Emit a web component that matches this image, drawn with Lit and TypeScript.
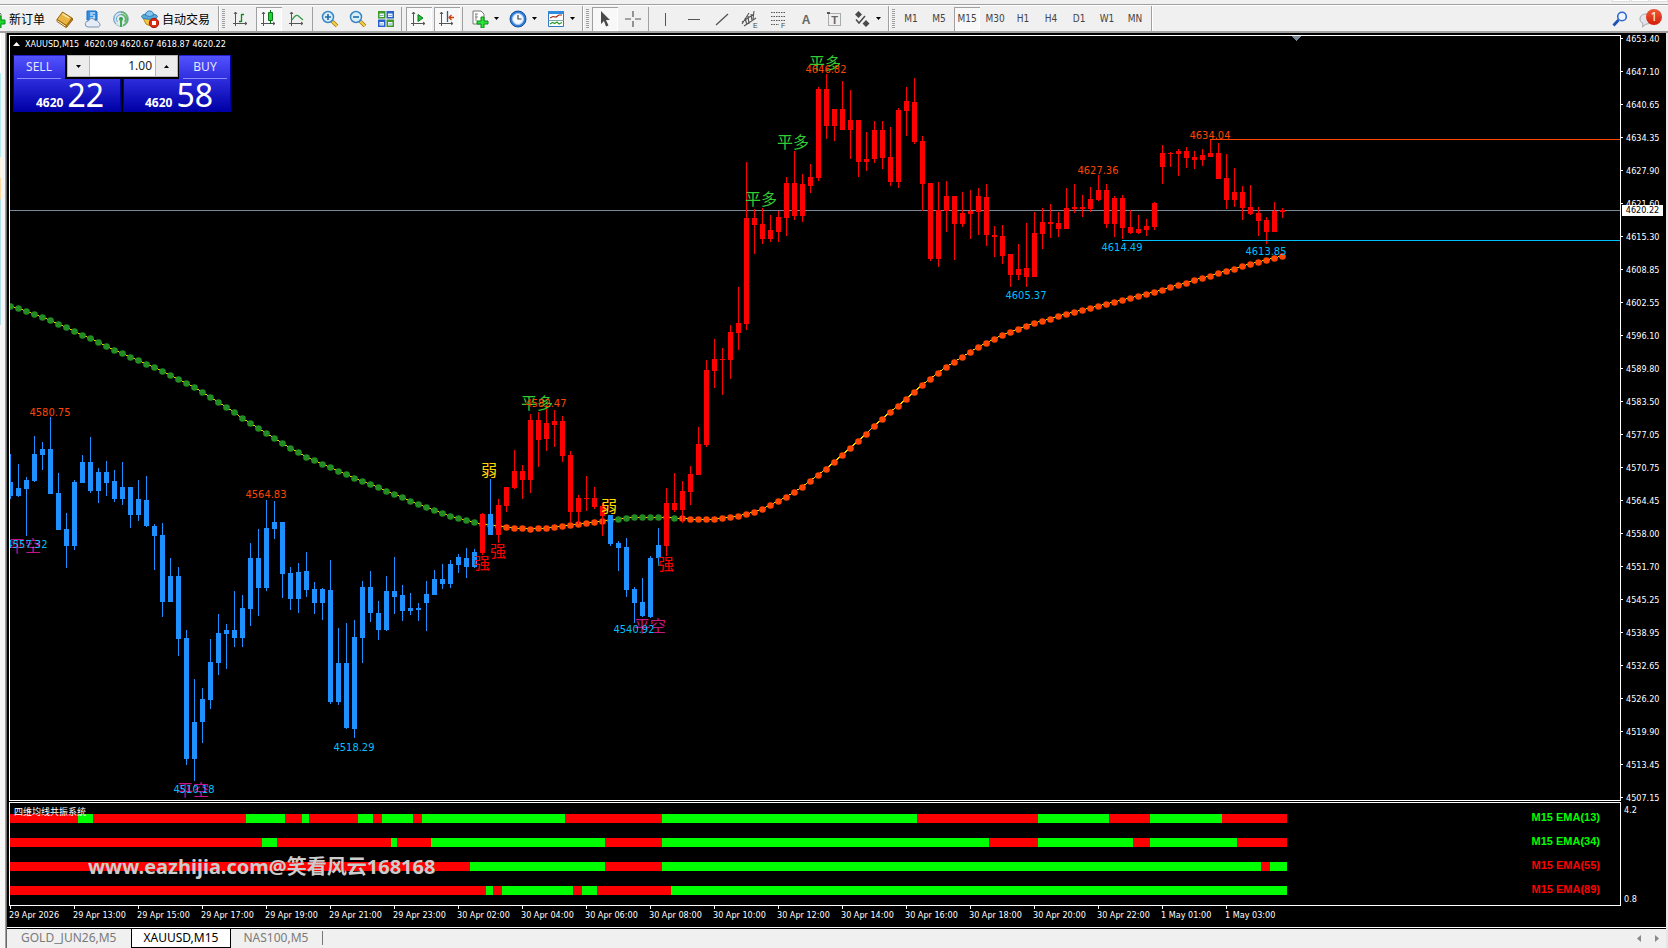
import { LitElement, html, svg, css } from "lit";
import { customElement, property, state } from "lit/decorators.js";
import { classMap } from "lit/directives/class-map.js";

/* Chart canvas: the plot's inner corner, the bar pitch and the first bar. */
const ORIGIN_X = 10;
const ORIGIN_Y = 36;
const PITCH = 8;
const barX = (i: number) => ORIGIN_X + i * PITCH;

/* high, body top, body bottom, low for each bar */
const BARS: number[][] = [
  [454,482,496,499],[464,488,496,497],[477,480,489,536],[436,454,481,482],[442,449,455,470],[417,449,494,494],
  [473,493,530,530],[513,529,546,568],[480,482,546,550],[455,462,483,483],[437,462,491,493],[468,472,491,503],
  [461,472,483,496],[470,481,499,502],[462,487,499,505],[487,487,515,528],[480,499,515,521],[476,500,526,527],
  [524,526,536,570],[523,535,602,617],[558,576,602,602],[567,576,639,656],[630,638,759,765],[679,722,759,781],
  [688,699,722,743],[639,662,700,709],[614,633,663,675],[624,630,634,669],[591,630,638,647],[595,608,638,647],
  [543,558,609,626],[529,558,588,616],[500,528,588,591],[501,522,529,539],[522,522,574,598],[567,573,599,610],
  [563,572,599,613],[552,571,590,597],[582,589,603,614],[588,589,603,620],[560,590,702,704],[628,663,702,705],
  [623,663,728,729],[620,637,729,738],[581,587,638,663],[571,587,613,622],[601,613,630,640],[576,591,630,631],
  [557,591,597,614],[585,595,611,621],[593,608,611,615],[603,608,610,621],[581,594,603,631],[570,579,595,595],
  [564,579,584,589],[560,564,584,588],[554,557,565,573],[548,558,567,578],[549,552,567,568],[513,514,553,555],
  [479,514,535,535],[499,505,535,543],[487,487,506,512],[450,471,488,489],[465,471,480,499],[414,420,480,493],
  [412,420,440,467],[408,423,439,451],[410,421,425,447],[416,421,456,462],[451,455,512,522],[495,498,512,524],
  [476,498,499,511],[487,498,507,509],[503,506,516,536],[515,515,544,546],[541,543,548,571],[538,547,590,597],
  [587,589,603,623],[578,602,616,617],[556,558,617,618],[528,545,558,566],[488,503,546,556],[473,503,510,512],
  [481,491,510,523],[466,474,492,505],[427,444,475,475],[360,370,445,447],[339,359,371,388],[348,359,360,395],
  [325,332,360,379],[287,323,333,350],[162,218,324,330],[209,218,225,254],[208,224,239,244],[215,230,239,242],
  [211,217,232,242],[177,183,218,236],[151,183,216,220],[174,184,216,222],[164,177,186,193],[87,89,178,181],
  [74,89,126,139],[109,109,126,141],[81,109,130,130],[90,120,130,159],[120,120,162,177],[132,159,162,171],
  [121,130,159,163],[121,130,158,169],[127,157,182,186],[108,110,182,188],[87,101,111,136],[78,102,142,144],
  [136,141,184,211],[183,183,259,261],[182,210,259,267],[181,196,211,232],[196,196,224,260],[192,213,224,227],
  [190,211,214,239],[188,196,212,235],[184,197,235,246],[226,235,237,257],[225,236,256,264],[254,254,275,287],
  [244,269,275,280],[223,268,277,287],[212,233,277,277],[208,222,234,249],[204,222,224,238],[212,223,229,237],
  [188,208,229,229],[184,207,209,213],[195,207,209,217],[187,199,209,212],[175,190,200,201],[184,190,224,228],
  [196,198,224,237],[195,198,228,239],[210,227,233,234],[215,229,233,234],[219,226,230,236],[202,203,227,230],
  [145,153,167,184],[152,153,154,167],[149,151,154,176],[147,151,158,168],[151,157,160,169],[149,155,160,166],
  [140,153,157,157],[143,153,179,179],[154,178,200,209],[168,192,200,207],[186,192,208,220],[185,207,214,215],
  [207,213,221,236],[217,220,232,244],[202,211,232,232],[208,210,212,218],
];

const isBlue = (i: number) => i < 59 || i === 60 || (i >= 75 && i <= 81);
const isGreenDot = (i: number) => i <= 60 || (i >= 75 && i <= 83);

/* moving average, one level per bar */
const AVERAGE: number[] = [
  306,308,311,314,317,320,324,327,331,335,338,342,346,350,353,357,360,364,367,371,375,379,383,387,392,397,402,407,
  412,418,423,428,433,438,443,448,452,457,460,464,467,471,474,478,481,484,487,491,494,497,501,504,507,510,513,516,
  518,520,522,524,525,526,527,528,528,529,528,528,527,526,525,524,523,522,521,520,519,518,517,517,517,517,517,518,
  518,519,519,519,519,518,517,516,514,512,509,505,501,497,492,487,481,475,469,462,455,448,441,434,426,419,412,406,
  399,392,385,379,373,367,362,357,352,347,343,339,335,332,329,326,323,321,319,316,314,312,310,308,306,304,302,300,
  298,296,294,292,290,287,285,283,280,278,276,273,271,269,266,264,262,260,258,256,
];

type Mark = { x: number; y: number; t: string; k: string };
const SIGNS: Mark[] = [
  { x: 761, y: 198, t: "平多", k: "close-long" },
  { x: 793, y: 141, t: "平多", k: "close-long" },
  { x: 825, y: 62, t: "平多", k: "close-long" },
  { x: 537, y: 402, t: "平多", k: "close-long" },
  { x: 25, y: 545, t: "平空", k: "close-short" },
  { x: 193, y: 789, t: "平空", k: "close-short" },
  { x: 650, y: 625, t: "平空", k: "close-short" },
  { x: 489, y: 469, t: "弱", k: "weak" },
  { x: 609, y: 505, t: "弱", k: "weak" },
  { x: 482, y: 562, t: "强", k: "strong" },
  { x: 498, y: 550, t: "强", k: "strong" },
  { x: 666, y: 563, t: "强", k: "strong" },
];
const LEVELS: Mark[] = [
  { x: 50, y: 412, t: "4580.75", k: "peak" },
  { x: 27, y: 544, t: "4557.32", k: "trough" },
  { x: 266, y: 494, t: "4564.83", k: "peak" },
  { x: 194, y: 789, t: "4510.18", k: "trough" },
  { x: 354, y: 747, t: "4518.29", k: "trough" },
  { x: 546, y: 403, t: "4582.47", k: "peak" },
  { x: 634, y: 629, t: "4540.92", k: "trough" },
  { x: 826, y: 69, t: "4646.82", k: "peak" },
  { x: 1026, y: 295, t: "4605.37", k: "trough" },
  { x: 1098, y: 170, t: "4627.36", k: "peak" },
  { x: 1122, y: 247, t: "4614.49", k: "trough" },
  { x: 1210, y: 135, t: "4634.04", k: "peak" },
  { x: 1266, y: 251, t: "4613.85", k: "trough" },
];

const PRICES = (
  "4653.40 4647.10 4640.65 4634.35 4627.90 4621.60 4615.30 4608.85 4602.55 4596.10 4589.80 4583.50 " +
  "4577.05 4570.75 4564.45 4558.00 4551.70 4545.25 4538.95 4532.65 4526.20 4519.90 4513.45 4507.15"
).split(" ");

const TIMES = [
  "29 Apr 2026",
  ...["13", "15", "17", "19", "21", "23"].map((h) => `29 Apr ${h}:00`),
  ...["02", "04", "06", "08", "10", "12", "14", "16", "18", "20", "22"].map((h) => `30 Apr ${h}:00`),
  "1 May 01:00",
  "1 May 03:00",
];

/* right-hand edge of every trend run; runs alternate and start falling */
const TRENDS = [
  { name: "M15 EMA(13)", up: true, y: 814, ends: [78,93,246,285,302,309,358,373,382,413,422,565,662,917,1038,1109,1150,1222,1287] },
  { name: "M15 EMA(34)", up: true, y: 838, ends: [262,277,391,397,431,605,662,989,1038,1133,1150,1237,1287] },
  { name: "M15 EMA(55)", up: false, y: 862, ends: [470,605,662,1261,1270,1287] },
  { name: "M15 EMA(89)", up: false, y: 886, ends: [486,493,502,573,582,597,671,1287] },
];

const axes = svg`<path d="M3.500 2v14M1 13.500h14M2 4l1.500-2L5 4M13 12l2 1.500L13 15" fill="none" stroke="#555"/>`;

const ICONS: Record<string, unknown> = {
  order: svg`<path d="M2 1h8l3 3v10H2z" fill="#fff" stroke="#777"/><path d="M9 6h4v4h4v4h-4v4H9v-4H5v-4h4z" fill="#1fd62c" stroke="#0a8a18"/>`,
  book: svg`<path d="M1 9.500 6.500 2 16 8l-5.500 7.500z" fill="#e9b440" stroke="#9a6410"/><path d="M1 9.500v2L10 17.500v-2z" fill="#fff3cc" stroke="#9a6410"/><path d="M10.500 15.500v2L16.500 10V8z" fill="#c98a1c" stroke="#9a6410"/><path d="M6.500 4 13 8" stroke="#fbe3a0" stroke-width="1.500"/>`,
  cloud: svg`<path d="M3 1h9l1 1v8H3z" fill="#2f8fe6" stroke="#1b6fc0"/><path d="M6 3h5M6 5h3M10 5v3M6 8h5" stroke="#fff"/><path d="M4 17a3 3 0 0 1 .500-6A3.500 3.500 0 0 1 11 10.500a2.800 2.800 0 0 1 3.500 2A2.400 2.400 0 0 1 14.500 17z" fill="#e4ecf6" stroke="#7d93b2"/>`,
  signal: svg`<circle cx="9" cy="9" r="7.500" fill="#dfe9ef" stroke="#a9bfd0"/><path d="M9 4.500a4.500 4.500 0 0 0-3.500 7.500M9 2a7 7 0 0 0-5 12" fill="none" stroke="#6aa2cf"/><path d="M9 4.500A4.500 4.500 0 0 1 12.500 12M9 2a7 7 0 0 1 2 13.500" fill="none" stroke="#5cb266" stroke-width="1.600"/><circle cx="9" cy="9" r="2" fill="#2f9d48"/><path d="M9 9v8" stroke="#3cae4b" stroke-width="2"/>`,
  robot: svg`<path d="M2 8h13l-3 6q-3.500 3-7 0z" fill="#f3c846" stroke="#b8871a"/><ellipse cx="8.500" cy="6.500" rx="8" ry="2.800" fill="#58a9dc" stroke="#2c7cb2"/><path d="M4.500 5.500q0-4.500 4-4.500t4 4.500q-4 2-8 0z" fill="#84c6ee" stroke="#2c7cb2"/><circle cx="13" cy="13" r="4.700" fill="#e02a12" stroke="#a01404"/><path d="M11 11h4v4h-4z" fill="#fff"/>`,
  bars: svg`${axes}<path d="M9.500 4v8M7 11.500h2.500M9.500 4.500H12" stroke="#0a8a18" fill="none" stroke-width="1.300"/>`,
  candles: svg`${axes}<path d="M10.500 0v14" stroke="#0a6a14"/><path d="M8.500 2.500h4v8h-4z" fill="#23d134" stroke="#0a7a18"/>`,
  line: svg`${axes}<path d="M4 10q4-7 7-3.500L15 10" fill="none" stroke="#3a9a46" stroke-width="1.300"/>`,
  zoomin: svg`<path d="m11 11 5 5" stroke="#a87a10" stroke-width="3.800"/><path d="m11 11 5 5" stroke="#f2cf4a" stroke-width="2.200"/><circle cx="7" cy="7" r="5.500" fill="#d8effb" stroke="#3a86c2" stroke-width="1.500"/><path d="M4 7h6M7 4v6" stroke="#1f6cab" stroke-width="1.600"/>`,
  zoomout: svg`<path d="m11 11 5 5" stroke="#a87a10" stroke-width="3.800"/><path d="m11 11 5 5" stroke="#f2cf4a" stroke-width="2.200"/><circle cx="7" cy="7" r="5.500" fill="#d8effb" stroke="#3a86c2" stroke-width="1.500"/><path d="M4 7h6" stroke="#1f6cab" stroke-width="1.600"/>`,
  tile: svg`<path d="M1 1h7.500v7.500H1zM9.500 9.500H17V17H9.500z" fill="#3f9a2a"/><path d="M9.500 1H17v7.500H9.500zM1 9.500h7.500V17H1z" fill="#2b5fd0"/><path d="M2.500 3.500H7V7H2.500zM11 3.500h4.500V7H11zM2.500 12H7v3.500H2.500zM11 12h4.500v3.500H11z" fill="#eef4ff"/><path d="M3 5.500h3.500M11.500 5.500H15M3 14h3.500M11.500 14H15" stroke="#8ab"/>`,
  scroll: svg`${axes}<path d="M8 4.500v7l5-3.500z" fill="#23c134" stroke="#0a7a18"/>`,
  shift: svg`${axes}<path d="M9.500 1v11" stroke="#1f5fa8" stroke-width="1.300"/><path d="M16 7.500h-5M13.500 5 11 7.500l2.500 2.500" fill="none" stroke="#d0400c" stroke-width="1.300"/>`,
  template: svg`<path d="M2 1h8l3 3v10H2z" fill="#fff" stroke="#777"/><path d="M5 4v7M4 4h3M4 7h3" stroke="#888" fill="none"/><path d="M10 7h3v4h4v3h-4v4h-3v-4H6v-3h4z" fill="#2be338" stroke="#0a8a18"/>`,
  clock: svg`<circle cx="9" cy="9" r="8" fill="#2f7ed8" stroke="#174f9c"/><circle cx="9" cy="9" r="5.500" fill="#f4f9ff" stroke="#a9c8ec"/><path d="M9 5v4h3.500" fill="none" stroke="#444" stroke-width="1.200"/>`,
  indicator: svg`<path d="M1.500 1.500h15v15h-15z" fill="#fff" stroke="#2f7ac2"/><path d="M1.500 2.500h15" stroke="#2f8ae2" stroke-width="3"/><path d="M1.500 10.500h15" stroke="#7aa"/><path d="m3 8 3-1.500 3 .500 3-2h3" fill="none" stroke="#a02a10" stroke-width="1.200"/><path d="m3 14 2.500-1.500 2 1 2.500-1.500 2 2 3-1.500" fill="none" stroke="#2a9a2a" stroke-width="1.200"/>`,
  cursor: svg`<path d="M5 1v13l3-3 2 5.500 2.500-1L10 10h4z" fill="#4a4a4a"/>`,
  cross: svg`<path d="M9 1v6M9 11v6M1 9h6M11 9h6" stroke="#555" stroke-width="1.200"/>`,
  vline: svg`<path d="M8.500 3v13" stroke="#555"/>`,
  hline: svg`<path d="M3 9.500h12" stroke="#555"/>`,
  trend: svg`<path d="M3 15 15 4" stroke="#555" stroke-width="1.300"/>`,
  channel: svg`<path d="m1 12 12-8M3 16 15 8M4 8l2 7M7 6l1 8M10 4l1 7M13 1l-1 8M1 14l7-11" stroke="#555" stroke-width="1.100"/><text x="12" y="18" font-size="7" fill="#444">E</text>`,
  fibo: svg`<path d="M2 2.500h14M2 6.500h14M2 10.500h14M2 14.500h8" stroke="#555" stroke-dasharray="1.500 1"/><text x="12" y="18" font-size="7" fill="#444">F</text>`,
  text: svg`<text x="9" y="14" font-size="12" font-weight="700" text-anchor="middle" fill="#666">A</text>`,
  label: svg`<path d="M3.500 3.500h12v12h-12z" fill="none" stroke="#666" stroke-dasharray="1 1"/><path d="M2 2h3v2H2z" fill="#555"/><text x="9.500" y="14" font-size="11" font-weight="700" text-anchor="middle" fill="#666">T</text>`,
  arrows: svg`<path d="M5.500 1 9 4.500 5.500 8 2 4.500zM13 10l3.500 3.500L13 17l-3.500-3.500z" fill="#4a4a4a"/><path d="m3 9.500 3 3.500 6-7" stroke="#4a4a4a" fill="none" stroke-width="1.500"/>`,
  search: svg`<path d="m7.500 10-5 5.500" stroke="#1f50b4" stroke-width="2.800"/><circle cx="11" cy="6.500" r="4.300" fill="#eef5ff" stroke="#2f66cf" stroke-width="1.600"/>`,
  chat: svg`<path d="M7 4c4 0 7 2.200 7 5s-3 5-7 5l-3.500 3 .500-3.500C2 12.500 1 11 1 9c0-2.800 2-5 6-5z" fill="#e2e4ea" stroke="#a4a6ae"/>`,
};

@customElement("tool-button")
class ToolButton extends LitElement {
  @property() icon = "";
  @property() text = "";
  @property() label = "";
  @property({ type: Boolean }) pressed = false;
  @property({ type: Boolean }) menu = false;

  static styles = css`
    :host { display: block; flex: none; }
    button {
      display: flex; align-items: center; box-sizing: border-box;
      min-width: 26px; height: 24px; padding: 0 4px; margin: 0;
      border: 0; background: none; color: #444;
      font: 10px/12px "DejaVu Sans Condensed", "Noto Sans", sans-serif;
      justify-content: center;
    }
    .caption { padding: 0; width: 26px; }
    .wide { padding: 0 5px; gap: 3px; font: 12px/16px "Noto Sans CJK SC", sans-serif; color: #000; justify-content: flex-start; }
    .menu { gap: 5px; justify-content: flex-start; width: 36px; padding-right: 2px; }
    .pressed { background: #f8f8f8; box-shadow: inset 1px 1px #a0a0a0, inset -1px -1px #fff; }
    svg { display: block; flex: none; width: 18px; height: 18px; font-family: "Liberation Sans", sans-serif; }
    .caret { width: 5px; height: 3px; }
  `;

  render() {
    const cls = { caption: !this.icon, wide: !!this.icon && !!this.text, menu: this.menu, pressed: this.pressed };
    return html`<button class=${classMap(cls)} aria-label=${this.label || this.text} aria-pressed=${this.pressed}>
      ${this.icon ? html`<svg viewBox="0 0 18 18" aria-hidden="true">${ICONS[this.icon]}</svg>` : null}${this.text}
      ${this.menu ? html`<svg class="caret" viewBox="0 0 5 3" aria-hidden="true"><path d="M0 0h5L2.500 3z" /></svg>` : null}
    </button>`;
  }
}

@customElement("main-toolbar")
class MainToolbar extends LitElement {
  @state() private frame = "M15";

  static styles = css`
    :host {
      display: flex; align-items: stretch; background: #f0f0f0; overflow: hidden;
      border-top: 1px solid #a0a0a0; box-shadow: inset 0 1px #fff; height: 25px;
      border-bottom: 2px solid #a0a0a0; padding-top: 1px; box-sizing: content-box;
    }
    .group { display: flex; align-items: center; gap: 2px; padding-right: 3px; border-right: 1px solid #a0a0a0; box-shadow: 1px 0 #fff; }
    .first { margin-left: -17px; }
    .grip { width: 3px; height: 20px; margin: 0 1px 0 3px; background: repeating-linear-gradient(#a0a0a0 0 1px, #f0f0f0 1px 2px); }
    .sep { width: 1px; height: 24px; margin: 0 2px 0 0; background: #a0a0a0; }
    .end { margin-left: auto; display: flex; align-items: center; gap: 2px; padding-right: 7px; }
    .inbox { position: relative; }
    .badge {
      position: absolute; right: -1px; top: 2px; width: 16px; height: 16px; border-radius: 50%;
      background: linear-gradient(#ee5a3a, #d41c0c); color: #fff; text-align: center;
      font: 12px/16px "Noto Sans", sans-serif;
    }
  `;

  render() {
    const b = (icon: string, label: string, pressed = false, menu = false) =>
      html`<tool-button icon=${icon} label=${label} ?pressed=${pressed} ?menu=${menu}></tool-button>`;
    return html`
      <div class="group first">
        <tool-button icon="order" text="新订单"></tool-button>
        ${b("book", "Market Watch")}${b("cloud", "Cloud")}${b("signal", "Signals")}
        <tool-button icon="robot" text="自动交易"></tool-button>
      </div>
      <div class="group">
        <span class="grip"></span>
        ${b("bars", "Bar chart")}${b("candles", "Candlesticks", true)}${b("line", "Line chart")}
        <span class="sep"></span>
        ${b("zoomin", "Zoom in")}${b("zoomout", "Zoom out")}${b("tile", "Tile windows")}
        <span class="sep"></span>
        ${b("scroll", "Auto scroll", true)}${b("shift", "Chart shift", true)}
        <span class="sep"></span>
        ${b("template", "Indicators", false, true)}${b("clock", "Periods", false, true)}${b("indicator", "Templates", false, true)}
      </div>
      <div class="group">
        <span class="grip"></span>
        ${b("cursor", "Cursor", true)}${b("cross", "Crosshair")}
        <span class="sep"></span>
        ${b("vline", "Vertical line")}${b("hline", "Horizontal line")}${b("trend", "Trendline")}${b("channel", "Channel")}
        ${b("fibo", "Fibonacci")}${b("text", "Text")}${b("label", "Text label")}${b("arrows", "Arrows", false, true)}
      </div>
      <div class="group">
        <span class="grip"></span>
        ${["M1", "M5", "M15", "M30", "H1", "H4", "D1", "W1", "MN"].map(
          (f) => html`<tool-button text=${f} ?pressed=${f === this.frame} @click=${() => (this.frame = f)}></tool-button>`
        )}
      </div>
      <div class="end">
        ${b("search", "Search")}
        <div class="inbox">${b("chat", "Messages")}<span class="badge">1</span></div>
      </div>
    `;
  }
}

@customElement("trade-panel")
class TradePanel extends LitElement {
  static styles = css`
    :host { display: flex; gap: 2px; position: relative; font-family: "Noto Sans", sans-serif; }
    .side {
      display: flex; flex-direction: column; align-items: stretch; box-sizing: border-box;
      width: 108px; height: 57px; margin: 0; padding: 0; border: 1px solid #0000a0; border-top-color: #2020d0;
      background: linear-gradient(#5252ff, #2c2cdc 24px, #0000a6); color: #fff; font-family: inherit; text-align: left;
    }
    .sell { clip-path: polygon(0 0, 52px 0, 52px 24px, 100% 24px, 100% 100%, 0 100%); }
    .buy { align-items: flex-end; clip-path: polygon(56px 0, 100% 0, 100% 100%, 0 100%, 0 24px, 56px 24px); }
    .name { width: 44px; margin: 0 3px; border-bottom: 1px solid #8c8cff; font-size: 12px; line-height: 22px; text-align: center; color: #e6e6ff; }
    .quote { display: flex; align-items: baseline; gap: 4px; padding-left: 22px; font-size: 12px; line-height: 32px; font-weight: 700; }
    .buy .quote { padding: 0 17px 0 0; }
    .big { font-size: 32px; font-weight: 400; }
    .volume {
      position: absolute; left: 54px; top: 0; display: flex; width: 111px; height: 22px;
      box-sizing: border-box; border: 1px solid #b8b8b8; background: #fff;
    }
    .step { width: 21px; padding: 0; margin: 0; border: 0; background: #ececec; display: grid; place-items: center; }
    .step svg { width: 5px; height: 3px; }
    input {
      flex: 1; min-width: 0; border: 0; border-left: 1px solid #b8b8b8; border-right: 1px solid #b8b8b8;
      padding: 0 3px; text-align: right; font: 12px/20px "Noto Sans", sans-serif; color: #222; background: #fff;
    }
  `;

  render() {
    return html`
      <button class="side sell"><span class="name">SELL</span><span class="quote">4620<span class="big">22</span></span></button>
      <button class="side buy"><span class="name">BUY</span><span class="quote">4620<span class="big">58</span></span></button>
      <div class="volume">
        <button class="step" aria-label="Decrease volume"><svg viewBox="0 0 5 3"><path d="M0 0h5L2.500 3z" /></svg></button>
        <input aria-label="Volume" value="1.00" />
        <button class="step" aria-label="Increase volume"><svg viewBox="0 0 5 3"><path d="M0 3h5L2.500 0z" /></svg></button>
      </div>
    `;
  }
}

@customElement("price-chart")
class PriceChart extends LitElement {
  static styles = css`
    :host {
      display: grid; grid-template-columns: minmax(0, 1fr) 45px; grid-template-rows: 766px 104px 20px; row-gap: 1px;
      background: #000; color: #fff; padding: 2px 0 0 2px;
      font: 9px/12px "DejaVu Sans Condensed", "Noto Sans", "Noto Sans CJK SC", sans-serif;
    }
    .plot { position: relative; border: 1px solid #fff; overflow: hidden; }
    .plot > svg { display: block; width: 100%; height: 100%; shape-rendering: crispEdges; }
    .head { position: absolute; left: 3px; top: 2px; display: flex; align-items: center; gap: 5px; white-space: pre; }
    .head svg { width: 7px; height: 4px; fill: #fff; }
    trade-panel { position: absolute; left: 3px; top: 19px; }
    .up { fill: red; } .down { fill: #1e90ff; }
    .average { fill: none; stroke: gold; }
    .dot { shape-rendering: auto; fill: #ff4500; } .dot.green { fill: #228b22; }
    text { text-anchor: middle; dominant-baseline: central; font-size: 11px; }
    .sign { font: 400 16px "Noto Sans CJK SC", sans-serif; }
    .peak { fill: #ff4500; } .trough { fill: #00bfff; }
    .close-long { fill: #32cd32; } .close-short { fill: #c71585; } .weak { fill: gold; } .strong { fill: red; }
    .prices { display: flex; flex-direction: column; justify-content: space-between; padding: 3px 0; position: relative; margin: 0; list-style: none; }
    .prices li { display: flex; align-items: center; height: 1px; gap: 3px; }
    .prices li::before { content: ""; width: 2px; height: 1px; background: #fff; }
    .current { position: absolute; left: 1px; top: 170px; width: 41px; height: 11px; line-height: 11px; background: #fff; color: #000; text-align: center; }
    .range { display: flex; flex-direction: column; justify-content: space-between; padding: 2px 3px 1px; }
    .trend-name { position: absolute; left: 4px; top: 3px; }
    .legend {
      position: absolute; right: 20px; top: 2px; margin: 0; padding: 0; list-style: none; color: red;
      font: 700 11px/24px "Liberation Sans", sans-serif;
    }
    .legend .rising { color: lime; }
    .rise { fill: lime; }
    .mark {
      position: absolute; left: 78px; top: 50px; color: #ccc; white-space: nowrap;
      font: 700 20px/28px "Noto Sans", "Noto Sans CJK SC", sans-serif;
    }
    .times { display: flex; overflow: hidden; grid-column: 1 / -1; margin: -1px 0 0; padding: 0; list-style: none; }
    .times li { flex: none; width: 64px; white-space: nowrap; box-sizing: border-box; }
    .times li::before { content: ""; display: block; width: 1px; height: 3px; margin-left: 1px; background: #fff; }
  `;

  private mark(m: Mark, extra = "") {
    return svg`<text class="${m.k} ${extra}" x=${m.x} y=${m.y}>${m.t}</text>`;
  }

  render() {
    return html`
      <section class="plot">
        <svg role="img" aria-label="XAUUSD, M15 candlestick chart">
          <g transform="translate(${-ORIGIN_X} ${-ORIGIN_Y})">
            <path d="M1291 36h10l-5 5z" fill="#778899" />
            <rect x="10" y="210" width="100%" height="1" fill="#778899" />
            <polyline class="average" points=${AVERAGE.map((y, i) => `${barX(i)},${y}`).join(" ")} />
            ${AVERAGE.map((y, i) => svg`<circle class="dot ${isGreenDot(i) ? "green" : ""}" cx=${barX(i) + 0.5} cy=${y + 0.5} r="3.3" />`)}
            ${BARS.map(
              ([h, t, b, l], i) => svg`<path class=${isBlue(i) ? "down" : "up"}
                d="M${barX(i)} ${h}h1V${l}h-1zM${barX(i) - 2} ${t}h5V${b}h-5z" />`
            )}
            <rect class="peak" x="1210" y="139" width="100%" height="1" />
            <rect class="trough" x="1122" y="240" width="100%" height="1" />
            ${SIGNS.map((m) => this.mark(m, "sign"))} ${LEVELS.map((m) => this.mark(m))}
          </g>
        </svg>
        <div class="head"><svg viewBox="0 0 7 4"><path d="M0 4h7L3.500 0z" /></svg>XAUUSD,M15  4620.09 4620.67 4618.87 4620.22</div>
        <trade-panel></trade-panel>
      </section>
      <ul class="prices">
        ${PRICES.map((p) => html`<li>${p}</li>`)}
        <div class="current">4620.22</div>
      </ul>
      <section class="plot">
        <svg role="img" aria-label="EMA trend ribbons">
          <g transform="translate(${-ORIGIN_X} -803)">
            ${TRENDS.map(({ y, ends }) =>
              ends.map((end, i) => {
                const start = i ? ends[i - 1] : ORIGIN_X;
                return svg`<rect class=${i % 2 ? "rise" : "up"} x=${start} y=${y} width=${end - start} height="9" />`;
              })
            )}
          </g>
        </svg>
        <div class="trend-name">四维均线共振系统</div>
        <ul class="legend">
          ${TRENDS.map((t) => html`<li class=${t.up ? "rising" : ""}>${t.name}</li>`)}
        </ul>
        <div class="mark">www.eazhijia.com@笑看风云168168</div>
      </section>
      <div class="range"><span>4.2</span><span>0.8</span></div>
      <ul class="times">
        ${TIMES.map((t) => html`<li>${t}</li>`)}
      </ul>
    `;
  }
}

@customElement("app-root")
class AppRoot extends LitElement {
  @state() private tab = "XAUUSD,M15";

  static styles = css`
    :host { display: flex; flex-direction: column; min-height: 100vh; background: #f0f0f0; font: 13px/18px "Noto Sans", sans-serif; }
    .title { height: 4px; display: flex; justify-content: flex-end; gap: 1px; }
    .title span { width: 18px; height: 2px; background: #fff; border: solid #ddd; border-width: 0 1px 1px; box-sizing: border-box; }
    .body { display: flex; flex: 1; }
    .watch { width: 1px; padding-right: 4px; border-right: 1px solid #a0a0a0; box-shadow: 1px 0 #696969; margin-right: 1px; background: #f6f6f6; }
    .watch div { background: #fff; }
    .head { height: 40px; } .watch .cyan { height: 84px; background: #b0eef2; } .watch .cream { height: 21px; background: #fff3dc; }
    .watch .sand { height: 21px; background: #ffd9a0; } .watch .sky { height: 126px; background: #b0dfe8; }
    .work { flex: 1; min-width: 0; display: flex; flex-direction: column; border-right: 2px solid #e6e6e6; }
    price-chart { border-bottom: 1px solid #fff; }
    .tabs { display: flex; align-items: flex-start; flex: 1; min-height: 20px; box-sizing: border-box; border-top: 1px solid #000; }
    .tabs button { border: 0; background: none; margin: 0; padding: 0 12px; font: 12px/18px "Noto Sans", sans-serif; color: #7a7a7a; height: 18px; white-space: nowrap; }
    .tabs .first { padding: 0 14px; }
    .tabs .active { background: #fff; color: #000; border: solid #000; border-width: 0 1px 1px; height: 19px; }
    .bar { width: 1px; height: 14px; margin: 2px 0 0 2px; background: #777; }
    .scroll { margin-left: auto; display: flex; }
    .tabs .scroll button { padding: 0 7px; }
    .scroll svg { width: 4px; height: 7px; fill: #888; display: block; }
  `;

  render() {
    return html`
      <div class="title"><span></span><span></span><span></span></div>
      <main-toolbar></main-toolbar>
      <div class="body">
        <div class="watch" aria-hidden="true">
          <div class="head"></div><div class="cyan"></div><div class="cream"></div><div class="sand"></div><div class="sky"></div>
        </div>
        <div class="work">
          <price-chart></price-chart>
          <nav class="tabs">
            ${["GOLD_JUN26,M5", "XAUUSD,M15", "NAS100,M5"].map(
              (t, i) => html`<button class=${classMap({ first: i === 0, active: t === this.tab })} @click=${() => (this.tab = t)}>${t}</button>`
            )}
            <span class="bar"></span>
            <span class="scroll">
              <button aria-label="Previous chart"><svg viewBox="0 0 4 7"><path d="M4 0v7L0 3.500z" /></svg></button>
              <button aria-label="Next chart"><svg viewBox="0 0 4 7"><path d="M0 0v7l4-3.500z" /></svg></button>
            </span>
          </nav>
        </div>
      </div>
    `;
  }
}
